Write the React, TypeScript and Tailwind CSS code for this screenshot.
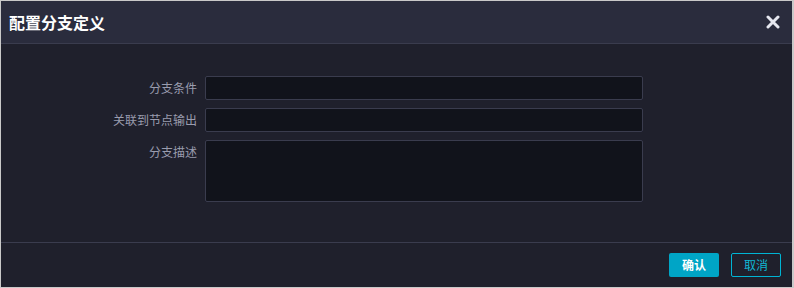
import React from 'react';

const fields = [
  { label: '分支条件', kind: 'input' },
  { label: '关联到节点输出', kind: 'input' },
  { label: '分支描述', kind: 'textarea' },
];

const App: React.FC = () => {
  return (
    <div
      className="w-[794px] h-[288px] border border-[#c9c9c9] border-r-2 bg-[#1f202c] flex flex-col"
      style={{ fontFamily: '"Noto Sans CJK SC", "Noto Sans", sans-serif' }}
    >
      <div className="h-[43px] shrink-0 bg-[#2a2c3d] border-b border-[#3a3c4e] flex items-center justify-between pl-[8px] pr-[12px]">
        <h2 className="text-[16px] font-bold text-white leading-none">配置分支定义</h2>
        <button className="text-[#e6e8f0]">
          <svg width="14" height="14" viewBox="0 0 14 14">
            <path d="M2 2L12 12M12 2L2 12" stroke="currentColor" strokeWidth="3" strokeLinecap="round" />
          </svg>
        </button>
      </div>

      <div className="flex-1 pt-[32px]">
        <div className="flex flex-col gap-[8px]">
          {fields.map((f) => (
            <div key={f.label} className="flex items-start">
              <label className="w-[204px] pr-[8px] text-right text-[12px] text-[#9a9cae] leading-[24px]">
                {f.label}
              </label>
              {f.kind === 'input' ? (
                <input className="w-[438px] h-[24px] bg-[#11131b] border border-[#3a3c4e] rounded-[2px] outline-none" />
              ) : (
                <textarea className="w-[438px] h-[62px] bg-[#11131b] border border-[#3a3c4e] rounded-[2px] outline-none resize-none" />
              )}
            </div>
          ))}
        </div>
      </div>

      <div className="h-[45px] shrink-0 border-t border-[#3a3c4e] flex items-center justify-end gap-[12px] pr-[11px] pb-[1px]">
        <button className="w-[50px] h-[24px] rounded-[2px] bg-[#00a5c6] text-white text-[12px] font-bold">确认</button>
        <button className="w-[50px] h-[24px] rounded-[2px] border border-[#00b4d4] text-[#10b8d6] text-[12px]">取消</button>
      </div>
    </div>
  );
};

export default App;
